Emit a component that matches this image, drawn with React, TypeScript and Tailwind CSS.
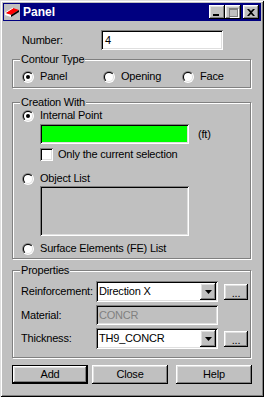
import { useId } from 'react'

const sunken =
  'shadow-[inset_1px_1px_#808080,inset_-1px_-1px_#fff,inset_2px_2px_#000,inset_-2px_-2px_#dfdfdf]'
const raised =
  'shadow-[inset_-1px_-1px_#000,inset_1px_1px_#fff,inset_-2px_-2px_#808080,inset_2px_2px_#dfdfdf]'

function Radio({ checked = false }: { checked?: boolean }) {
  const id = useId().replace(/:/g, '')
  return (
    <svg width="12" height="12" viewBox="0 0 12 12" className="shrink-0">
      <defs>
        <linearGradient id={`o${id}`} x1="0" y1="0" x2="1" y2="1">
          <stop offset="0.5" stopColor="#808080" />
          <stop offset="0.5" stopColor="#ffffff" />
        </linearGradient>
        <linearGradient id={`i${id}`} x1="0" y1="0" x2="1" y2="1">
          <stop offset="0.5" stopColor="#000000" />
          <stop offset="0.5" stopColor="#dfdfdf" />
        </linearGradient>
      </defs>
      <circle cx="6" cy="6" r="6" fill={`url(#o${id})`} />
      <circle cx="6" cy="6" r="5" fill={`url(#i${id})`} />
      <circle cx="6" cy="6" r="4" fill="#fff" />
      {checked && <circle cx="6" cy="6" r="2" fill="#000" />}
    </svg>
  )
}

function RadioItem({ label, checked, className }: { label: string; checked?: boolean; className?: string }) {
  return (
    <div className={`flex h-[13px] items-center gap-[6px] ${className ?? ''}`}>
      <Radio checked={checked} />
      <span>{label}</span>
    </div>
  )
}

function Arrow() {
  return (
    <svg width="7" height="4" viewBox="0 0 7 4">
      <polygon points="0,0 7,0 3.5,4" fill="#000" />
    </svg>
  )
}

function Combo({ value }: { value: string }) {
  return (
    <div className={`flex h-[21px] w-[122px] items-center bg-white pl-[3px] ${sunken}`}>
      <span className="flex-1">{value}</span>
      <div className={`mr-[2px] flex h-[17px] w-[16px] items-center justify-center bg-[#c0c0c0] ${raised}`}>
        <Arrow />
      </div>
    </div>
  )
}

function DotsButton() {
  return (
    <div
      className={`ml-[6px] flex h-[16px] w-[24px] items-end justify-center bg-[#c0c0c0] pb-[2px] leading-[10px] ${raised}`}
    >
      ...
    </div>
  )
}

function Legend({ children }: { children: string }) {
  return <legend className="ml-[7px] bg-[#c0c0c0] px-[1px] leading-[13px]">{children}</legend>
}

const group = 'w-[239px] border border-[#808080] shadow-[inset_1px_1px_#fff,1px_1px_#fff]'

function TitleIcon() {
  return (
    <svg width="16" height="16" viewBox="0 0 16 16" className="ml-[1px]">
      <rect width="16" height="16" fill="#c0c0c0" />
      <polygon points="1,9 9,4 15,6 7,11" fill="#ff0000" />
      <polygon points="1,9 7,11 7,13 1,11" fill="#ffffff" />
      <polygon points="7,11 15,6 15,8 7,13" fill="#000000" />
      <line x1="1" y1="9" x2="9" y2="4" stroke="#fff" strokeWidth="1" />
    </svg>
  )
}

function TitleButton({ children }: { children: React.ReactNode }) {
  return (
    <div className={`flex h-[14px] w-[16px] items-center justify-center bg-[#c0c0c0] ${raised}`}>{children}</div>
  )
}

export default function App() {
  return (
    <div
      className="h-[397px] w-[264px] bg-[#c0c0c0] p-[3px] font-['Liberation_Sans',Arial,sans-serif] text-[11px] tracking-[-0.2px] text-black shadow-[inset_1px_1px_#dfdfdf,inset_-1px_-1px_#000,inset_2px_2px_#fff,inset_-2px_-2px_#808080]"
    >
      {/* title bar */}
      <div className="flex h-[18px] items-center bg-[#000080] pr-[2px]">
        <TitleIcon />
        <span className="ml-[3px] flex-1 text-[12px] font-bold tracking-normal text-white">Panel</span>
        <TitleButton>
          <div className="mt-[6px] mr-[2px] h-[2px] w-[6px] bg-black" />
        </TitleButton>
        <TitleButton>
          <div className="h-[9px] w-[9px] border border-t-2 border-[#808080] shadow-[1px_1px_#fff]" />
        </TitleButton>
        <div className="ml-[2px]">
          <TitleButton>
            <svg width="8" height="7" viewBox="0 0 8 7">
              <path d="M0 0h2l2 2 2-2h2L5 3.5 8 7H6L4 5 2 7H0l3-3.5z" fill="#000" />
            </svg>
          </TitleButton>
        </div>
      </div>

      <div className="pl-[9px]">
        {/* number */}
        <div className="mt-[9px] flex h-[20px] items-center">
          <span className="ml-[10px] w-[79px]">Number:</span>
          <div className={`flex h-[20px] w-[122px] items-center bg-white pl-[4px] ${sunken}`}>4</div>
        </div>

        {/* contour type */}
        <fieldset className={`mt-[3px] pt-[4px] pb-[4px] ${group}`}>
          <Legend>Contour Type</Legend>
          <div className="ml-[9px] flex">
            <RadioItem label="Panel" checked className="w-[81px]" />
            <RadioItem label="Opening" className="w-[79px]" />
            <RadioItem label="Face" />
          </div>
        </fieldset>

        {/* creation with */}
        <fieldset className={`mt-[8px] pb-[3px] ${group}`}>
          <Legend>Creation With</Legend>
          <RadioItem label="Internal Point" checked className="ml-[9px]" />
          <div className="mt-[2px] ml-[27px] flex h-[20px] items-center">
            <div className={`h-[20px] w-[149px] bg-[#00ff00] ${sunken}`} />
            <span className="ml-[9px]">(ft)</span>
          </div>
          <div className="mt-[4px] ml-[27px] flex h-[13px] items-center gap-[5px]">
            <div className={`h-[13px] w-[13px] bg-white ${sunken}`} />
            <span>Only the current selection</span>
          </div>
          <RadioItem label="Object List" className="mt-[11px] ml-[9px]" />
          <div className={`mt-[1px] ml-[27px] h-[50px] w-[149px] bg-[#c0c0c0] ${sunken}`} />
          <RadioItem label="Surface Elements (FE) List" className="mt-[6px] ml-[9px]" />
        </fieldset>

        {/* properties */}
        <fieldset className={`mt-[5px] pt-[4px] pb-[8px] ${group}`}>
          <Legend>Properties</Legend>
          <div className="ml-[8px] flex h-[21px] items-center">
            <span className="w-[75px]">Reinforcement:</span>
            <Combo value="Direction X" />
            <DotsButton />
          </div>
          <div className="mt-[3px] ml-[8px] flex h-[20px] items-center">
            <span className="w-[75px]">Material:</span>
            <div className={`flex h-[20px] w-[122px] items-center bg-[#c0c0c0] pl-[3px] text-[#808080] ${sunken}`}>
              CONCR
            </div>
          </div>
          <div className="mt-[3px] ml-[8px] flex h-[21px] items-center">
            <span className="w-[75px]">Thickness:</span>
            <Combo value="TH9_CONCR" />
            <DotsButton />
          </div>
        </fieldset>

        {/* buttons */}
        <div className="mt-[7px] flex">
          <div className="h-[19px] w-[76px] border border-black">
            <div className={`flex h-full items-center justify-center ${raised}`}>Add</div>
          </div>
          <div className={`ml-[4px] flex h-[19px] w-[76px] items-center justify-center ${raised}`}>Close</div>
          <div className={`ml-[8px] flex h-[19px] w-[76px] items-center justify-center ${raised}`}>Help</div>
        </div>
      </div>
    </div>
  )
}
